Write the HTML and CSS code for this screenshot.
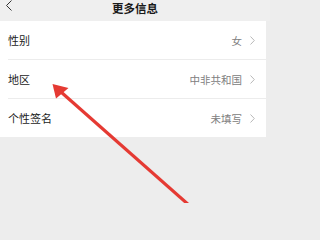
FILE: index.html
```html
<!DOCTYPE html>
<html lang="zh">
<head>
<meta charset="utf-8">
<link rel="stylesheet" href="styles.css">
</head>
<body>
<div class="page">
  <div class="header">
    <svg class="back" width="8" height="12" viewBox="0 0 8 12"><polyline points="6.5,0.5 1.5,5.5 6.5,10.5" fill="none" stroke="#333" stroke-width="1"/></svg>
    <div class="title">更多信息</div>
  </div>
  <div class="list">
    <div class="row">
      <span class="label">性别</span>
      <span class="value">女</span>
      <svg class="chev" width="5" height="9" viewBox="0 0 5 9"><polyline points="0.5,0.5 4.3,4.5 0.5,8.5" fill="none" stroke="#b8b8b8" stroke-width="1"/></svg>
    </div>
    <div class="row">
      <span class="label">地区</span>
      <span class="value">中非共和国</span>
      <svg class="chev" width="5" height="9" viewBox="0 0 5 9"><polyline points="0.5,0.5 4.3,4.5 0.5,8.5" fill="none" stroke="#b8b8b8" stroke-width="1"/></svg>
    </div>
    <div class="row">
      <span class="label">个性签名</span>
      <span class="value">未填写</span>
      <svg class="chev" width="5" height="9" viewBox="0 0 5 9"><polyline points="0.5,0.5 4.3,4.5 0.5,8.5" fill="none" stroke="#b8b8b8" stroke-width="1"/></svg>
    </div>
  </div>
  <svg class="arrow" width="270" height="203" viewBox="0 0 270 203">
    <line x1="61" y1="92" x2="190" y2="206" stroke="#e53a33" stroke-width="3.2"/>
    <polygon points="52.5,84 56,98.5 68.5,88" fill="#e53a33"/>
  </svg>
</div>
</body>
</html>
```
FILE: styles.css
```css
html, body {
  margin: 0;
  padding: 0;
  background: #ededed;
}
body {
  width: 270px;
  height: 203px;
  overflow: hidden;
  font-family: "Noto Sans CJK SC", "Noto Sans", sans-serif;
}
.page {
  position: relative;
  width: 270px;
  height: 203px;
}
.header {
  position: relative;
  height: 21px;
  background: #efefef;
  display: flex;
  justify-content: center;
}
.back {
  position: absolute;
  left: 5px;
  top: 0;
}
.title {
  font-size: 11.5px;
  line-height: 16px;
  font-weight: 700;
  color: #1a1a1a;
}
.list {
  background: #fff;
  margin-right: 4px;
  padding-left: 8px;
}
.row {
  display: flex;
  align-items: center;
  height: 38px;
  padding-right: 11px;
  border-bottom: 1px solid #ececec;
}
.row:last-child {
  border-bottom: none;
}
.label {
  flex: 1;
  font-size: 11px;
  color: #1b1b1b;
}
.value {
  font-size: 10.5px;
  color: #808080;
  margin-right: 8px;
}
.chev {
  display: block;
}
.arrow {
  position: absolute;
  left: 0;
  top: 0;
}
```
